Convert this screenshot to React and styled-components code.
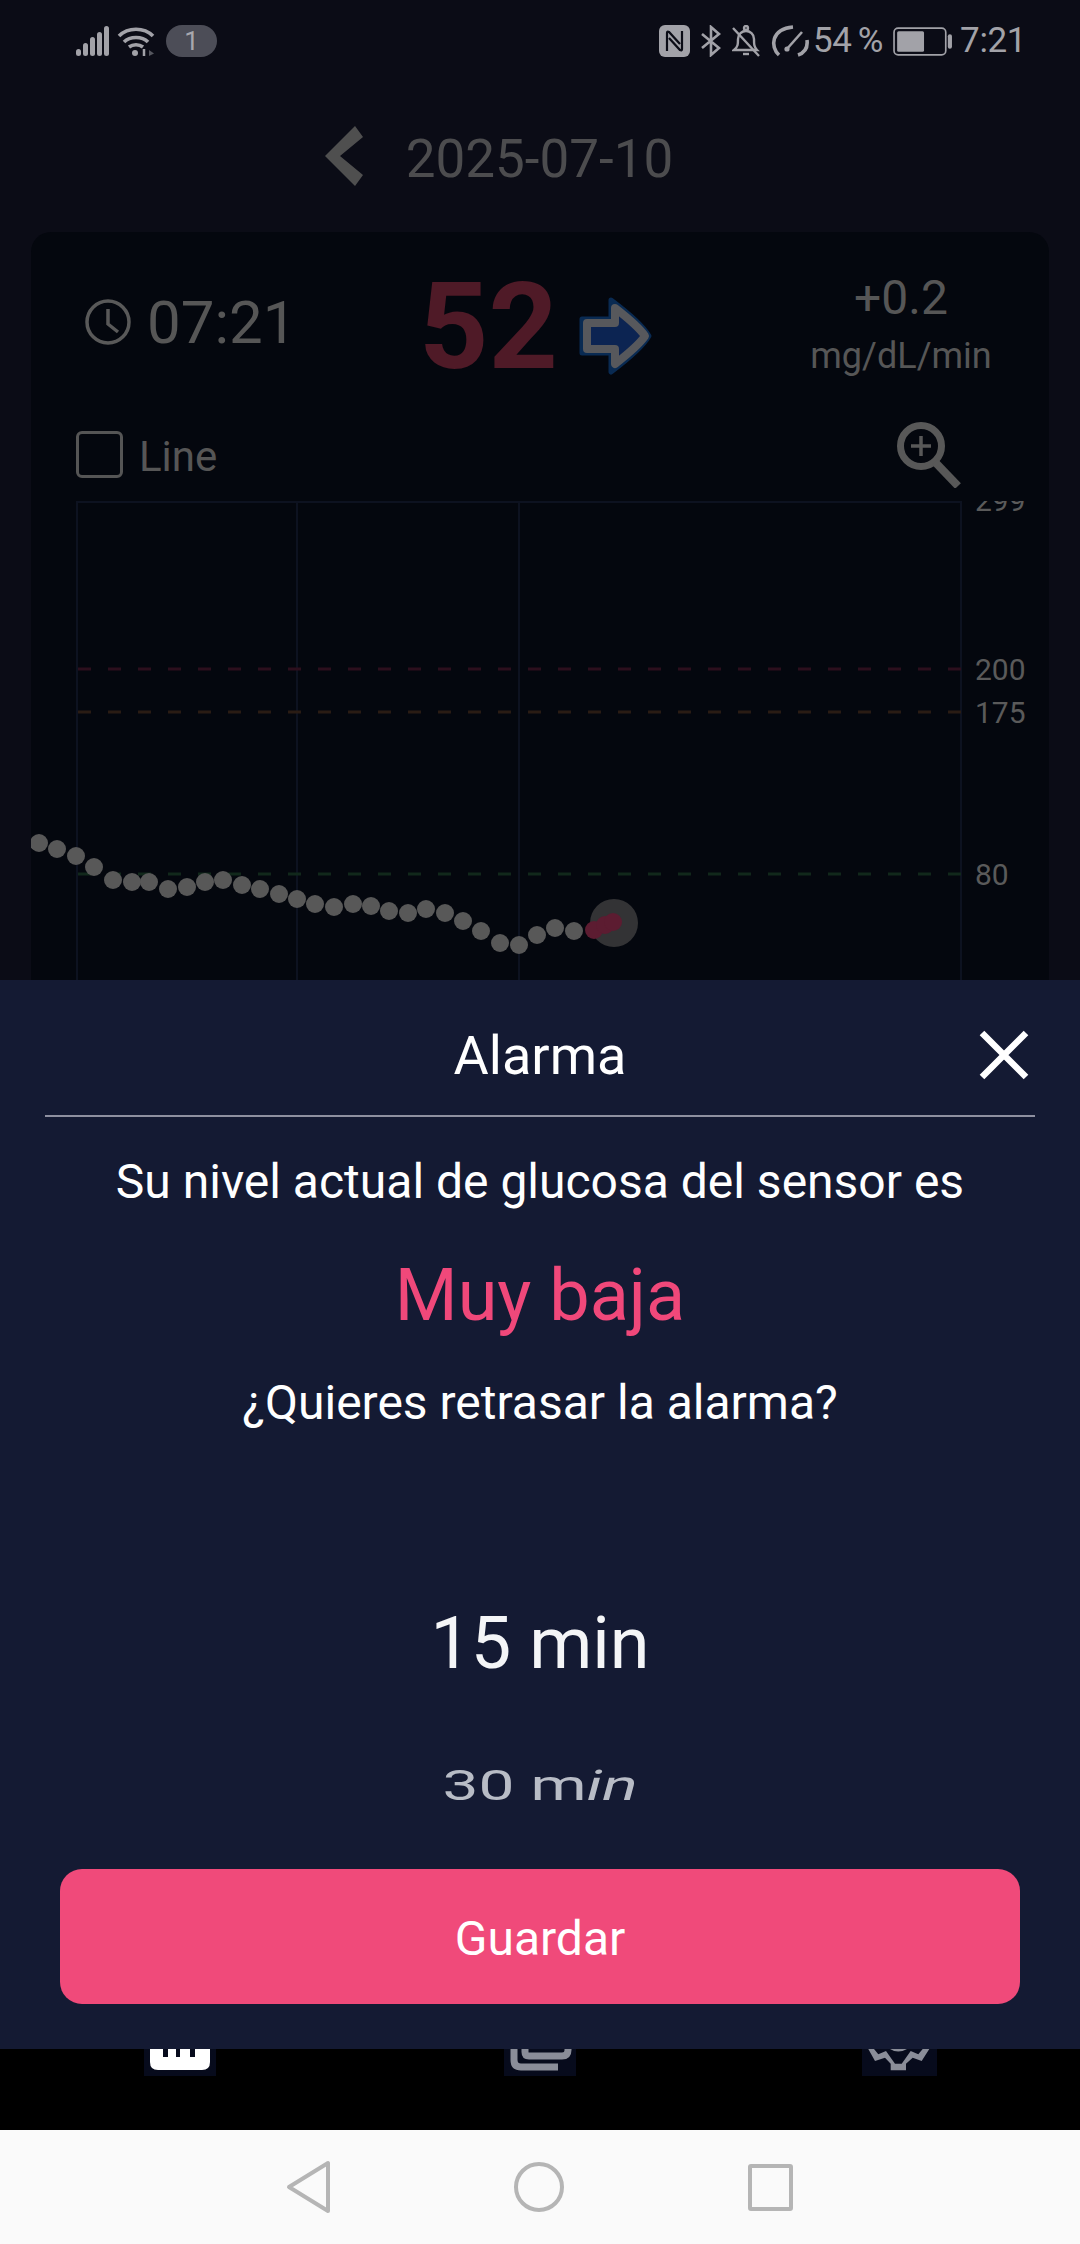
import React from "react"
import styled, { createGlobalStyle } from "styled-components"

const GlobalStyle = createGlobalStyle`
    html, body {
        margin: 0;
        padding: 0;
        background: #fafafa;
    }
    * {
        box-sizing: border-box;
    }
`

const Screen = styled.div`
    position: relative;
    width: 1080px;
    height: 2244px;
    display: flex;
    flex-direction: column;
    overflow: hidden;
    font-family: Roboto, "Liberation Sans", sans-serif;
    background: #0b0c16;
`

const StatusBar = styled.div`
    height: 80px;
    padding: 25px 54px 0 76px;
    display: flex;
    justify-content: space-between;
    align-items: flex-start;
    color: #a2a2a8;
`

const StatusGroup = styled.div`
    display: flex;
    align-items: center;
    height: 32px;
    gap: ${props => props.$gap || 4}px;
`

const StatusIcon = styled.svg`
    display: block;
    flex: none;
    margin-left: ${props => props.$left || 0}px;
`

const Badge = styled.div`
    width: 51px;
    height: 32px;
    margin-left: 4px;
    border-radius: 16px;
    background: #4c4d57;
    display: flex;
    align-items: center;
    justify-content: center;
    font-size: 26px;
    color: #a8a8ae;
`

const StatusText = styled.span`
    font-size: 35px;
    line-height: 32px;
    letter-spacing: -0.4px;
    word-spacing: -2px;
    margin-left: ${props => props.$left || 0}px;
`

const Header = styled.div`
    height: 152px;
    display: flex;
    align-items: flex-start;
    justify-content: center;
    padding: 46px 82px 0 0;
    gap: 43px;
`

const DateText = styled.div`
    margin-top: 1px;
    font-size: 53px;
    line-height: 64px;
    color: #4c4c4e;
`

const Card = styled.div`
    flex: 1;
    margin: 0 31px;
    background: #04070e;
    border-radius: 20px 20px 0 0;
    display: flex;
    flex-direction: column;
`

const ReadingRow = styled.div`
    height: 189px;
    display: flex;
    align-items: flex-start;
`

const TimeBlock = styled.div`
    width: 388px;
    padding: 66px 0 0 54px;
    display: flex;
    align-items: center;
    gap: 16px;
`

const TimeText = styled.span`
    margin-top: 2px;
    color: #565656;
    font-size: 60px;
    line-height: 46px;
`

const GlucoseBlock = styled.div`
    width: 350px;
    display: flex;
    align-items: flex-start;
    gap: 21px;
`

const GlucoseValue = styled.div`
    margin-top: 45px;
    font-size: 121px;
    line-height: 100px;
    font-weight: 700;
    color: #4f1a27;
`

const TrendIcon = styled.svg`
    display: block;
    margin-top: 64px;
`

const RateBlock = styled.div`
    width: 264px;
    padding-top: 39px;
    text-align: center;
    color: #565656;
`

const RateValue = styled.div`
    font-size: 48px;
    line-height: 54px;
`

const RateUnit = styled.div`
    margin-top: 9px;
    font-size: 36px;
    line-height: 44px;
`

const OptionsRow = styled.div`
    height: 80px;
    padding: 10px 0 0 45px;
    display: flex;
    align-items: flex-start;
    justify-content: space-between;
`

const CheckLabel = styled.div`
    display: flex;
    align-items: center;
    gap: 16px;
`

const CheckText = styled.span`
    margin-top: 4px;
    font-size: 42px;
    line-height: 42px;
    color: #565656;
`

const CheckBox = styled.div`
    width: 47px;
    height: 47px;
    border: 3px solid #555;
    border-radius: 6px;
`

const ZoomIcon = styled.svg`
    display: block;
    margin: -9px 86px 0 0;
`

const Chart = styled.svg`
    display: block;
    flex: none;
    width: 1017px;
    height: 520px;
`

const TabBar = styled.div`
    height: 126px;
    background: #000;
    padding-left: 144px;
    display: flex;
    align-items: flex-start;
    gap: 288px;
`

const TabTile = styled.svg`
    display: block;
    background: #070b1c;
    margin-left: ${props => props.$shift || 0}px;
`

const NavBar = styled.div`
    height: 114px;
    background: #fafafa;
    padding: 30px 0 0 286px;
    display: flex;
    align-items: flex-start;
    gap: 180px;
`

const Sheet = styled.div`
    position: absolute;
    left: 0;
    right: 0;
    top: 980px;
    height: 1069px;
    background: #141a33;
    display: flex;
    flex-direction: column;
    align-items: center;
    color: #fff;
`

const SheetHeader = styled.div`
    position: relative;
    width: 990px;
    height: 137px;
    padding-top: 16px;
    display: flex;
    align-items: center;
    justify-content: center;
    border-bottom: 2px solid #8e90a0;
    font-size: 54px;
`

const CloseIcon = styled.svg`
    position: absolute;
    right: 6px;
    top: 50px;
`

const Message = styled.div`
    font-size: 48px;
    line-height: 56px;
    margin-top: ${props => props.$top}px;
`

const Severity = styled.div`
    font-size: 72px;
    line-height: 84px;
    margin-top: 44px;
    color: #f0487a;
`

const WheelCurrent = styled.div`
    margin-top: 171px;
    font-size: 72px;
    line-height: 84px;
    color: #f4f5f7;
`

const WheelNext = styled.div`
    margin-top: 80px;
    font-size: 64px;
    line-height: 40px;
    color: #b8bcc6;
    transform: scaleY(0.66);
`

const Slanted = styled.span`
    display: inline-block;
    transform: skewX(-10deg);
`

const SaveButton = styled.button`
    width: 960px;
    height: 135px;
    margin-top: 63px;
    padding: 3px 0 0;
    border: none;
    border-radius: 22px;
    background: #f04a7a;
    color: #fff;
    font-family: inherit;
    font-size: 48px;
`

const dots = [
    [39, 843], [57, 849], [76, 856], [94, 867], [113, 880], [132, 882], [149, 882], [168, 889],
    [187, 887], [205, 882], [223, 880], [242, 885], [260, 889], [279, 894], [297, 899], [315, 904],
    [334, 907], [353, 904], [371, 906], [389, 911], [408, 913], [426, 909], [445, 913], [463, 921],
    [481, 931], [500, 943], [519, 945], [537, 935], [555, 928], [574, 931],
]
const alarmDots = [[594, 930], [605, 925], [613, 922]]

const limits = [
    { y: 669, color: "#2c0f1d" },
    { y: 712, color: "#2a1c14" },
    { y: 874, color: "#11281b" },
]

const labels = [
    { y: 511, text: "299" },
    { y: 680, text: "200" },
    { y: 723, text: "175" },
    { y: 885, text: "80" },
]

// chart coordinates are page pixels, the viewBox takes care of the card offset
const GlucoseChart = () => (
    <Chart viewBox="31 501 1017 520">
        <g stroke="#0d1220" strokeWidth="2" fill="none">
            <path d="M76 502H961" />
            {[77, 297, 519, 961].map(x => <path key={x} d={`M${x} 501V1021`} />)}
        </g>
        {limits.map(l => (
            <path key={l.y} d={`M78 ${l.y}H961`} stroke={l.color} strokeWidth="3" strokeDasharray="13 17" />
        ))}
        {labels.map(l => (
            <text key={l.text} x="975" y={l.y} fontSize="30" fill="#5a5a5a">{l.text}</text>
        ))}
        {dots.map(([x, y]) => <circle key={x} cx={x} cy={y} r="9" fill="#585858" />)}
        <circle cx="614" cy="923" r="24" fill="#333335" />
        {alarmDots.map(([x, y]) => <circle key={x} cx={x} cy={y} r="9" fill="#5c1c31" />)}
    </Chart>
)

const App = () => {
    return (
        <>
            <GlobalStyle />
            <Screen>
                <StatusBar>
                    <StatusGroup $gap={7}>
                        <svg width="34" height="32" viewBox="0 0 34 32" fill="#a2a2a8">
                            <rect x="0" y="24" width="5" height="7" rx="2.5" />
                            <rect x="7" y="18" width="5" height="13" rx="2.5" />
                            <rect x="14" y="12" width="5" height="19" rx="2.5" />
                            <rect x="21" y="7" width="5" height="24" rx="2.5" />
                            <rect x="28" y="1" width="5" height="30" rx="2.5" />
                        </svg>
                        <svg width="38" height="32" viewBox="0 0 38 32" fill="none" stroke="#a2a2a8" strokeWidth="3.6">
                            <path d="M2 11C11 2 27 2 36 11" />
                            <path d="M7 17C13 11 25 11 31 17" />
                            <path d="M12 22C16 19 22 19 26 22" />
                            <circle cx="18" cy="28" r="3" fill="#a2a2a8" stroke="none" />
                            <path d="M27 24V31" strokeWidth="2.5" />
                            <path d="M32 25L37 28.5L32 31Z" fill="#55565e" stroke="none" />
                        </svg>
                        <Badge>1</Badge>
                    </StatusGroup>
                    <StatusGroup>
                        <StatusIcon width="31" height="32" viewBox="0 0 31 32">
                            <rect width="31" height="32" rx="6" fill="#a2a2a8" />
                            <path d="M8 26V8Q8 6 10 7L21 19M23 6V24Q23 26 21 25L10 13" fill="none" stroke="#0b0c16" strokeWidth="2.2" />
                        </StatusIcon>
                        <StatusIcon $left={6} width="22" height="32" viewBox="0 0 22 32" fill="none" stroke="#a2a2a8" strokeWidth="2.6">
                            <path d="M2 9L19 23L11 30V2L19 9L2 23" />
                        </StatusIcon>
                        <StatusIcon $left={6} width="28" height="32" viewBox="0 0 28 32" fill="none" stroke="#a2a2a8" strokeWidth="2.4">
                            <path d="M2 25H25C22 22 22 19 22 14C22 9 18 6 14 6C10 6 6 9 6 14C6 19 6 22 2 25Z" />
                            <circle cx="14" cy="3" r="2" />
                            <path d="M11 29H17" />
                            <path d="M1 3L27 31" />
                        </StatusIcon>
                        <StatusIcon $left={7} width="38" height="32" viewBox="0 0 38 32" fill="none" stroke="#a2a2a8" strokeWidth="3.6">
                            <path d="M8 30C-1 22 0 4 22 2" />
                            <path d="M27 30C33 28 37 23 36 15" />
                            <path d="M15 25L31 7" strokeWidth="2.6" />
                            <circle cx="16" cy="24" r="2.6" fill="#a2a2a8" stroke="none" />
                        </StatusIcon>
                        <StatusText>54 %</StatusText>
                        <StatusIcon $left={6} width="60" height="29" viewBox="0 0 58 28">
                            <rect x="1" y="1" width="50" height="26" rx="4" fill="none" stroke="#a2a2a8" strokeWidth="1.6" />
                            <rect x="4" y="4" width="26" height="20" rx="1.5" fill="#a2a2a8" />
                            <rect x="53" y="7" width="4" height="14" rx="2" fill="#a2a2a8" />
                        </StatusIcon>
                        <StatusText $left={3}>7:21</StatusText>
                    </StatusGroup>
                </StatusBar>
                <Header>
                    <svg width="38" height="60" viewBox="0 0 38 60" fill="#4f4f4f">
                        <path d="M30 0L38 11L15 30L38 49L30 60L0 30Z" />
                    </svg>
                    <DateText>2025-07-10</DateText>
                </Header>
                <Card>
                    <ReadingRow>
                        <TimeBlock>
                            <svg width="46" height="46" viewBox="0 0 46 46" fill="none" stroke="#595959" strokeWidth="3.5">
                                <circle cx="23" cy="23" r="21" />
                                <path d="M23 10V25L33 33" />
                            </svg>
                            <TimeText>07:21</TimeText>
                        </TimeBlock>
                        <GlucoseBlock>
                            <GlucoseValue>52</GlucoseValue>
                            <TrendIcon width="74" height="80" viewBox="0 0 74 80">
                                <path d="M3 23H32V4C40 10 63 28 70 40C63 52 40 70 32 76V57H3Z" fill="#0c2452" stroke="#092a52" strokeWidth="5" strokeLinejoin="round" />
                                <path d="M8 27H36V12C45 19 60 31 66 40C60 49 45 61 36 68V53H8Z" fill="#0c2452" stroke="#57585c" strokeWidth="8" strokeLinejoin="round" />
                            </TrendIcon>
                        </GlucoseBlock>
                        <RateBlock>
                            <RateValue>+0.2</RateValue>
                            <RateUnit>mg/dL/min</RateUnit>
                        </RateBlock>
                    </ReadingRow>
                    <OptionsRow>
                        <CheckLabel>
                            <CheckBox />
                            <CheckText>Line</CheckText>
                        </CheckLabel>
                        <ZoomIcon width="66" height="66" viewBox="0 0 66 66" fill="none" stroke="#585858">
                            <circle cx="24" cy="24" r="20.5" strokeWidth="7" />
                            <path d="M24 14V34M14 24H34" strokeWidth="3.5" />
                            <path d="M38 40L61 64" strokeWidth="8" />
                        </ZoomIcon>
                    </OptionsRow>
                    <GlucoseChart />
                </Card>
                <TabBar>
                    <TabTile width="72" height="72" viewBox="0 0 72 72">
                        <path d="M6 0H19V53H24V0H32V53H36V0H46V53H51V0H66V58Q66 66 58 66H14Q6 66 6 58Z" fill="#fff" />
                    </TabTile>
                    <TabTile width="72" height="72" viewBox="0 0 72 72" fill="none" stroke="#8a8d98" strokeWidth="7">
                        <path d="M10 40V56Q10 63 17 63H54" />
                        <path d="M21 40V48Q21 52 25 52H58Q64 52 64 46V40" />
                    </TabTile>
                    <TabTile $shift={-2} width="75" height="72" viewBox="0 0 75 72" fill="#8a8d98">
                        <path d="M6.3 45L13 57L23 53.7L28.7 59.7V66.3H44V59.7L50.7 53.7L59.7 57L67.3 45H60.7L56.3 50.3L48.7 47L39.7 59.7H33L24 47L16.3 50.3L12 45Z" />
                        <path d="M28 45Q36 50 45 45Z" />
                    </TabTile>
                </TabBar>
                <NavBar>
                    <svg width="46" height="54" viewBox="0 0 46 54" fill="none" stroke="#b5b5b5" strokeWidth="4" strokeLinejoin="round">
                        <path d="M42 3V51L3 27Z" />
                    </svg>
                    <svg width="54" height="54" viewBox="0 0 54 54" fill="none" stroke="#b5b5b5" strokeWidth="4">
                        <circle cx="27" cy="27" r="23" />
                    </svg>
                    <svg width="48" height="54" viewBox="0 0 48 54" fill="none" stroke="#b5b5b5" strokeWidth="4" strokeLinejoin="round">
                        <rect x="4" y="6" width="41" height="43" rx="1" />
                    </svg>
                </NavBar>
                <Sheet>
                    <SheetHeader>
                        Alarma
                        <CloseIcon width="50" height="50" viewBox="0 0 50 50" stroke="#fff" strokeWidth="6.5">
                            <path d="M3 3L47 47M47 3L3 47" />
                        </CloseIcon>
                    </SheetHeader>
                    <Message $top={37}>Su nivel actual de glucosa del sensor es</Message>
                    <Severity>Muy baja</Severity>
                    <Message $top={37}>¿Quieres retrasar la alarma?</Message>
                    <WheelCurrent>15 min</WheelCurrent>
                    <WheelNext>30 m<Slanted>in</Slanted></WheelNext>
                    <SaveButton>Guardar</SaveButton>
                </Sheet>
            </Screen>
        </>
    )
}

export default App
